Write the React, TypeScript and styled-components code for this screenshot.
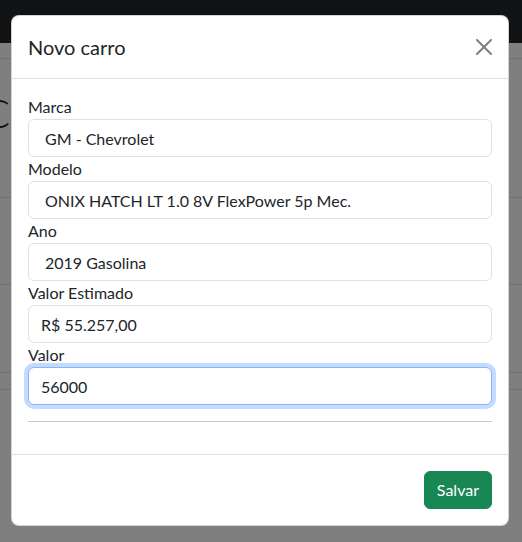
import React from "react";
import styled, { createGlobalStyle } from "styled-components";

const GlobalStyle = createGlobalStyle`
  html, body { margin: 0; padding: 0; }
  body {
    font-family: Lato, "Noto Sans", sans-serif;
    color: #212529;
    background: #fff;
    overflow: hidden;
  }
  * { box-sizing: border-box; }
`;

const Page = styled.div`
  position: relative;
  width: 522px;
  height: 542px;
  overflow: hidden;
  background: #fff;
`;

const Navbar = styled.div`
  height: 43px;
  background: #212529;
`;

const Strip = styled.div<{ $h: number }>`
  height: ${(p) => p.$h}px;
  border-bottom: 1px solid #dee2e6;
`;

const HeadingBlock = styled.div`
  height: 139px;
  border-bottom: 1px solid #dee2e6;
  padding-top: 30px;
  margin-left: -17px;
`;

const PageTitle = styled.h1`
  margin: 0;
  font-size: 40px;
  line-height: 48px;
  font-weight: 300;
  color: #212529;
`;

const Backdrop = styled.div`
  position: absolute;
  inset: 0;
  background: rgba(0, 0, 0, 0.5);
`;

const Dialog = styled.div`
  position: absolute;
  top: 15px;
  left: 11px;
  width: 498px;
  background: #fff;
  border: 1px solid rgba(0, 0, 0, 0.175);
  border-radius: 8px;
  display: flex;
  flex-direction: column;
`;

const Header = styled.div`
  display: flex;
  align-items: center;
  justify-content: space-between;
  padding: 16px;
  border-bottom: 1px solid #dee2e6;
`;

const Title = styled.h5`
  margin: 0;
  font-size: 20px;
  line-height: 30px;
  font-weight: 400;
  color: #212529;
`;

const CloseButton = styled.button`
  width: 24px;
  height: 24px;
  padding: 4px;
  margin-right: -4px;
  border: 0;
  background: transparent;
  opacity: 0.5;
  display: flex;
  align-items: center;
  justify-content: center;
  cursor: pointer;
`;

const Body = styled.div`
  padding: 16px;
  display: flex;
  flex-direction: column;
`;

const Label = styled.label`
  display: block;
  font-size: 16px;
  line-height: 24px;
  color: #212529;
`;

const Input = styled.input<{ $select?: boolean; $focus?: boolean }>`
  display: block;
  width: 100%;
  height: 38px;
  padding: 6px 12px 6px ${(p) => (p.$select ? 16 : 12)}px;
  font: inherit;
  font-size: 16px;
  line-height: 24px;
  color: #212529;
  background: #fff;
  border: 1px solid ${(p) => (p.$focus ? "#86b7fe" : "#dee2e6")};
  border-radius: 6px;
  outline: none;
  box-shadow: ${(p) => (p.$focus ? "0 0 0 4px rgba(13, 110, 253, 0.25)" : "none")};
`;

const Rule = styled.hr`
  margin: 16px 0;
  border: 0;
  border-top: 1px solid #212529;
  opacity: 0.25;
`;

const Footer = styled.div`
  display: flex;
  justify-content: flex-end;
  align-items: center;
  padding: 12px;
  border-top: 1px solid #dee2e6;
`;

const SaveButton = styled.button`
  margin: 4px;
  height: 38px;
  padding: 6px 12px;
  font: inherit;
  font-size: 16px;
  line-height: 24px;
  color: #fff;
  background: #198754;
  border: 1px solid #198754;
  border-radius: 6px;
  cursor: pointer;
`;

const fields = [
  { label: "Marca", value: "GM - Chevrolet", select: true },
  { label: "Modelo", value: "ONIX HATCH LT 1.0 8V FlexPower 5p Mec.", select: true },
  { label: "Ano", value: "2019 Gasolina", select: true },
  { label: "Valor Estimado", value: "R$ 55.257,00" },
  { label: "Valor", value: "56000", focus: true },
];

export default function App() {
  return (
    <>
      <GlobalStyle />
      <Page>
        <Navbar />
        <Strip $h={16} />
        <HeadingBlock>
          <PageTitle>C</PageTitle>
        </HeadingBlock>
        <Strip $h={87} />
        <Strip $h={88} />
        <Strip $h={17} />
        <Backdrop />
        <Dialog>
          <Header>
            <Title>Novo carro</Title>
            <CloseButton aria-label="Close">
              <svg width="16" height="16" viewBox="0 0 16 16" fill="#000">
                <path d="M.293.293a1 1 0 0 1 1.414 0L8 6.586 14.293.293a1 1 0 1 1 1.414 1.414L9.414 8l6.293 6.293a1 1 0 0 1-1.414 1.414L8 9.414l-6.293 6.293a1 1 0 0 1-1.414-1.414L6.586 8 .293 1.707a1 1 0 0 1 0-1.414z" />
              </svg>
            </CloseButton>
          </Header>
          <Body>
            {fields.map((f) => (
              <div key={f.label}>
                <Label>{f.label}</Label>
                <Input readOnly value={f.value} $select={f.select} $focus={f.focus} />
              </div>
            ))}
            <Rule />
          </Body>
          <Footer>
            <SaveButton>Salvar</SaveButton>
          </Footer>
        </Dialog>
      </Page>
    </>
  );
}
